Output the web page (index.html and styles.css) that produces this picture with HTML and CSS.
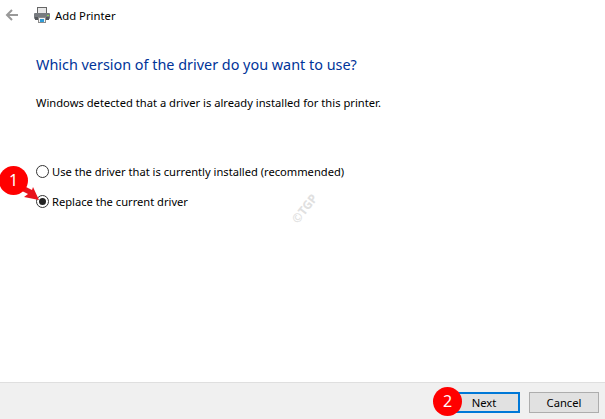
FILE: index.html
```html
<!DOCTYPE html>
<html lang="en">
<head>
<meta charset="utf-8">
<title>Add Printer</title>
<link rel="stylesheet" href="styles.css">
</head>
<body>
<div class="window">
  <header class="titlebar">
    <svg class="back" width="16" height="14" viewBox="0 0 16 14"><path d="M14 7H3M8 2 3 7l5 5" fill="none" stroke="#999" stroke-width="2"/></svg>
    <svg class="printer" width="16" height="16" viewBox="0 0 16 16">
      <rect x="3.5" y="0.5" width="9" height="6" fill="#e8e8e8" stroke="#666"/>
      <rect x="0" y="6" width="16" height="6" rx="1" fill="#777b7f"/>
      <rect x="1" y="10" width="14" height="3" fill="#53575b"/>
      <rect x="4.5" y="10.5" width="7" height="5" fill="#f4f4f4" stroke="#8c8c8c"/>
      <rect x="6" y="12" width="4" height="3" fill="#2f9bd6"/>
      <rect x="13" y="8" width="2" height="1" fill="#8fd14f"/>
    </svg>
    <span class="window-title">Add Printer</span>
  </header>
  <main class="content">
    <h1 class="heading">Which version of the driver do you want to use?</h1>
    <p class="description">Windows detected that a driver is already installed for this printer.</p>
    <div class="options">
      <label class="option"><span class="radio"></span><span class="option-text">Use the driver that is currently installed (recommended)</span></label>
      <label class="option"><span class="radio checked"></span><span class="option-text">Replace the current driver</span></label>
    </div>
  </main>
  <footer class="footer">
    <button class="btn primary">Next</button>
    <button class="btn">Cancel</button>
  </footer>
  <span class="watermark">©TGP</span>
  <svg class="arrow" width="20" height="18" viewBox="0 0 20 18"><path d="M0 5 2 0 10 4 11 1 17 14 2 11 6 8Z" fill="#e8121b"/></svg>
  <span class="badge badge-one">1</span>
  <span class="badge badge-two">2</span>
</div>
</body>
</html>
```
FILE: styles.css
```css
* { box-sizing: border-box; }
html, body { margin: 0; padding: 0; }
body { background: #fff; font-family: "Noto Sans", "Open Sans", sans-serif; color: #000; }
.window { position: relative; width: 605px; height: 419px; display: flex; flex-direction: column; overflow: hidden; background: #fff; }
.titlebar { height: 32px; display: flex; align-items: center; padding-left: 4px; flex: none; }
.back { margin-right: 14px; margin-bottom: 2px; }
.printer { margin-right: 5px; margin-bottom: 2px; }
.window-title { font-size: 11.3px; margin-bottom: 1px; }
.content { flex: 1; padding: 23px 0 0 36px; }
.heading { margin: 0; font-size: 14.4px; line-height: 20px; font-weight: 400; color: #003399; }
.description { margin: 20px 0 0; font-size: 11.2px; line-height: 16px; }
.options { margin-top: 52px; display: flex; flex-direction: column; gap: 14px; }
.option { display: flex; align-items: center; font-size: 11.15px; line-height: 16px; height: 16px; }
.option-text { margin-top: 2px; }
.radio { width: 13px; height: 13px; border: 1px solid #333; border-radius: 50%; background: #fff; margin-right: 3px; position: relative; flex: none; }
.radio.checked::after { content: ""; position: absolute; left: 2px; top: 2px; width: 7px; height: 7px; border-radius: 50%; background: #222; }
.footer { height: 37px; flex: none; background: #f0f0f0; border-top: 1px solid #dfdfdf; display: flex; justify-content: flex-end; align-items: flex-start; gap: 9px; padding: 9px 6px 0 0; }
.btn { width: 70px; height: 21px; padding: 0; background: #e1e1e1; border: 1px solid #adadad; font: 11.2px/16px "Noto Sans", "Open Sans", sans-serif; color: #000; }
.btn.primary { border: 2px solid #0078d7; padding-right: 2px; }
.watermark { position: absolute; left: 288px; top: 200px; font-size: 12px; font-weight: 700; color: #e0e0e0; transform: rotate(-52deg); }
.badge { position: absolute; width: 29px; height: 29px; border-radius: 50%; background: #f00; color: #fff; font-size: 16px; line-height: 29px; text-align: center; }
.badge-one { left: -1px; top: 166px; }
.badge-two { left: 433px; top: 387px; }
.arrow { position: absolute; left: 22px; top: 186px; }
```
